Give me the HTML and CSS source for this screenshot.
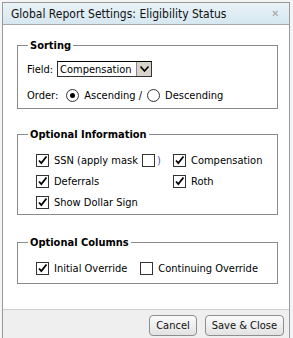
FILE: index.html
```html
<!DOCTYPE html>
<html lang="en">
<head>
    <meta charset="UTF-8">
    <title>Global Report Settings: Eligibility Status</title>
    <link rel="stylesheet" href="styles.css">
</head>
<body>
    <div class="dialog">
        <div class="titlebar">
            <span class="title">Global Report Settings: Eligibility Status</span>
            <span class="close">&#x2715;</span>
        </div>
        <div class="content">
            <fieldset class="group sorting">
                <legend>Sorting</legend>
                <div class="row">
                    <span class="label">Field:</span>
                    <span class="select">
                        <span class="select-text">Compensation</span>
                        <span class="select-btn"><svg width="11" height="8" viewBox="0 0 11 8"><path d="M1.5 1.5 L5.5 6 L9.5 1.5" fill="none" stroke="#000" stroke-width="1.6"/></svg></span>
                    </span>
                </div>
                <div class="row">
                    <span class="label">Order:</span>
                    <span class="radio on"></span><span class="text">Ascending /</span>
                    <span class="radio"></span><span class="text">Descending</span>
                </div>
            </fieldset>

            <fieldset class="group info">
                <legend>Optional Information</legend>
                <div class="grid">
                    <div class="item">
                        <span class="check on"><svg width="11" height="11" viewBox="0 0 11 11"><path d="M2 5.5 L4.3 8 L9.5 1.5" fill="none" stroke="#000" stroke-width="1.8"/></svg></span>
                        <span class="text">SSN (apply mask</span>
                        <span class="check"></span>
                        <span class="text paren">)</span>
                    </div>
                    <div class="item">
                        <span class="check on"><svg width="11" height="11" viewBox="0 0 11 11"><path d="M2 5.5 L4.3 8 L9.5 1.5" fill="none" stroke="#000" stroke-width="1.8"/></svg></span>
                        <span class="text">Compensation</span>
                    </div>
                    <div class="item">
                        <span class="check on"><svg width="11" height="11" viewBox="0 0 11 11"><path d="M2 5.5 L4.3 8 L9.5 1.5" fill="none" stroke="#000" stroke-width="1.8"/></svg></span>
                        <span class="text">Deferrals</span>
                    </div>
                    <div class="item">
                        <span class="check on"><svg width="11" height="11" viewBox="0 0 11 11"><path d="M2 5.5 L4.3 8 L9.5 1.5" fill="none" stroke="#000" stroke-width="1.8"/></svg></span>
                        <span class="text">Roth</span>
                    </div>
                    <div class="item">
                        <span class="check on"><svg width="11" height="11" viewBox="0 0 11 11"><path d="M2 5.5 L4.3 8 L9.5 1.5" fill="none" stroke="#000" stroke-width="1.8"/></svg></span>
                        <span class="text">Show Dollar Sign</span>
                    </div>
                </div>
            </fieldset>

            <fieldset class="group columns">
                <legend>Optional Columns</legend>
                <div class="row">
                    <span class="check on"><svg width="11" height="11" viewBox="0 0 11 11"><path d="M2 5.5 L4.3 8 L9.5 1.5" fill="none" stroke="#000" stroke-width="1.8"/></svg></span>
                    <span class="text">Initial Override</span>
                    <span class="check gap"></span>
                    <span class="text">Continuing Override</span>
                </div>
            </fieldset>
        </div>
        <div class="footer">
            <button class="btn">Cancel</button>
            <button class="btn">Save &amp; Close</button>
        </div>
    </div>
</body>
</html>
```

FILE: styles.css
```css
body {
    margin: 0;
    background-color: #f2f4f5;
    font-family: "DejaVu Sans Condensed", "DejaVu Sans", sans-serif;
    font-size: 11px;
    color: #000;
}
.dialog {
    margin: 2px 0 0 2px;
    width: 286px;
    height: 340px;
    background-color: #fff;
    border: 1px solid #9a9a9a;
    display: flex;
    flex-direction: column;
}
.titlebar {
    height: 21px;
    display: flex;
    align-items: center;
    justify-content: space-between;
    padding: 0 10px 0 8px;
    background: linear-gradient(#eaf3f8, #d6e7f0);
    border-bottom: 1px solid #a8a8a8;
}
.title {
    font-size: 12px;
    color: #111;
}
.close {
    font-size: 10px;
    font-weight: bold;
    color: #a0a0a0;
}
.content {
    padding: 14px 11px 0 14px;
}
.group {
    margin: 0;
    padding: 0 0 0 9px;
    border: 1px solid #8a8a8a;
}
.group legend {
    font-weight: bold;
    font-size: 11px;
    padding: 0 2px;
    margin-left: 1px;
}
.row {
    display: flex;
    align-items: center;
    height: 26px;
}
.sorting {
    height: 68px;
    margin-bottom: 19px;
}
.sorting .row:first-of-type {
    margin-top: 4px;
}
.label {
    margin-right: 4px;
}
.select {
    display: flex;
    align-items: center;
    border: 1px solid #333;
    border-top-color: #000;
    height: 14px;
    padding-left: 2px;
    background: #fff;
}
.select-text {
    width: 76px;
}
.select-btn {
    width: 14px;
    height: 14px;
    background: #d8d4cc;
    display: flex;
    align-items: center;
    justify-content: center;
    border-left: 1px solid #888;
}
.radio {
    width: 11px;
    height: 11px;
    border: 1px solid #333;
    border-radius: 50%;
    margin: 0 5px 0 4px;
    position: relative;
    background: #fff;
}
.radio.on::after {
    content: "";
    position: absolute;
    left: 3px;
    top: 3px;
    width: 5px;
    height: 5px;
    border-radius: 50%;
    background: #000;
}
.radio + .text {
    margin-right: 1px;
}
.check {
    width: 11px;
    height: 11px;
    border: 1px solid #333;
    background: #fff;
    display: inline-flex;
    margin-right: 5px;
}
.info {
    height: 85px;
    margin-bottom: 21px;
}
.grid {
    display: grid;
    grid-template-columns: 137px auto;
    margin-top: 9px;
}
.item {
    display: flex;
    align-items: center;
    height: 21px;
    padding-left: 9px;
}
.item .text + .check {
    margin-left: 4px;
    margin-right: 2px;
}
.paren {
    color: #4455aa;
}
.columns {
    height: 46px;
}
.columns .row {
    padding-left: 9px;
    margin-top: 6px;
}
.columns .gap {
    margin-left: 13px;
}
.footer {
    margin-top: auto;
    box-sizing: border-box;
    height: 34px;
    background-color: #efefef;
    border-top: 1px solid #cfcfcf;
    display: flex;
    justify-content: flex-end;
    align-items: flex-start;
    gap: 8px;
    padding: 5px 5px 0 0;
}
.btn {
    font-family: "DejaVu Sans Condensed", "DejaVu Sans", sans-serif;
    font-size: 11px;
    height: 21px;
    padding: 0 6px;
    border: 1px solid #8e8e8e;
    border-radius: 4px;
    background: linear-gradient(#fbfbfb, #e2e2e2);
    color: #111;
}
```
